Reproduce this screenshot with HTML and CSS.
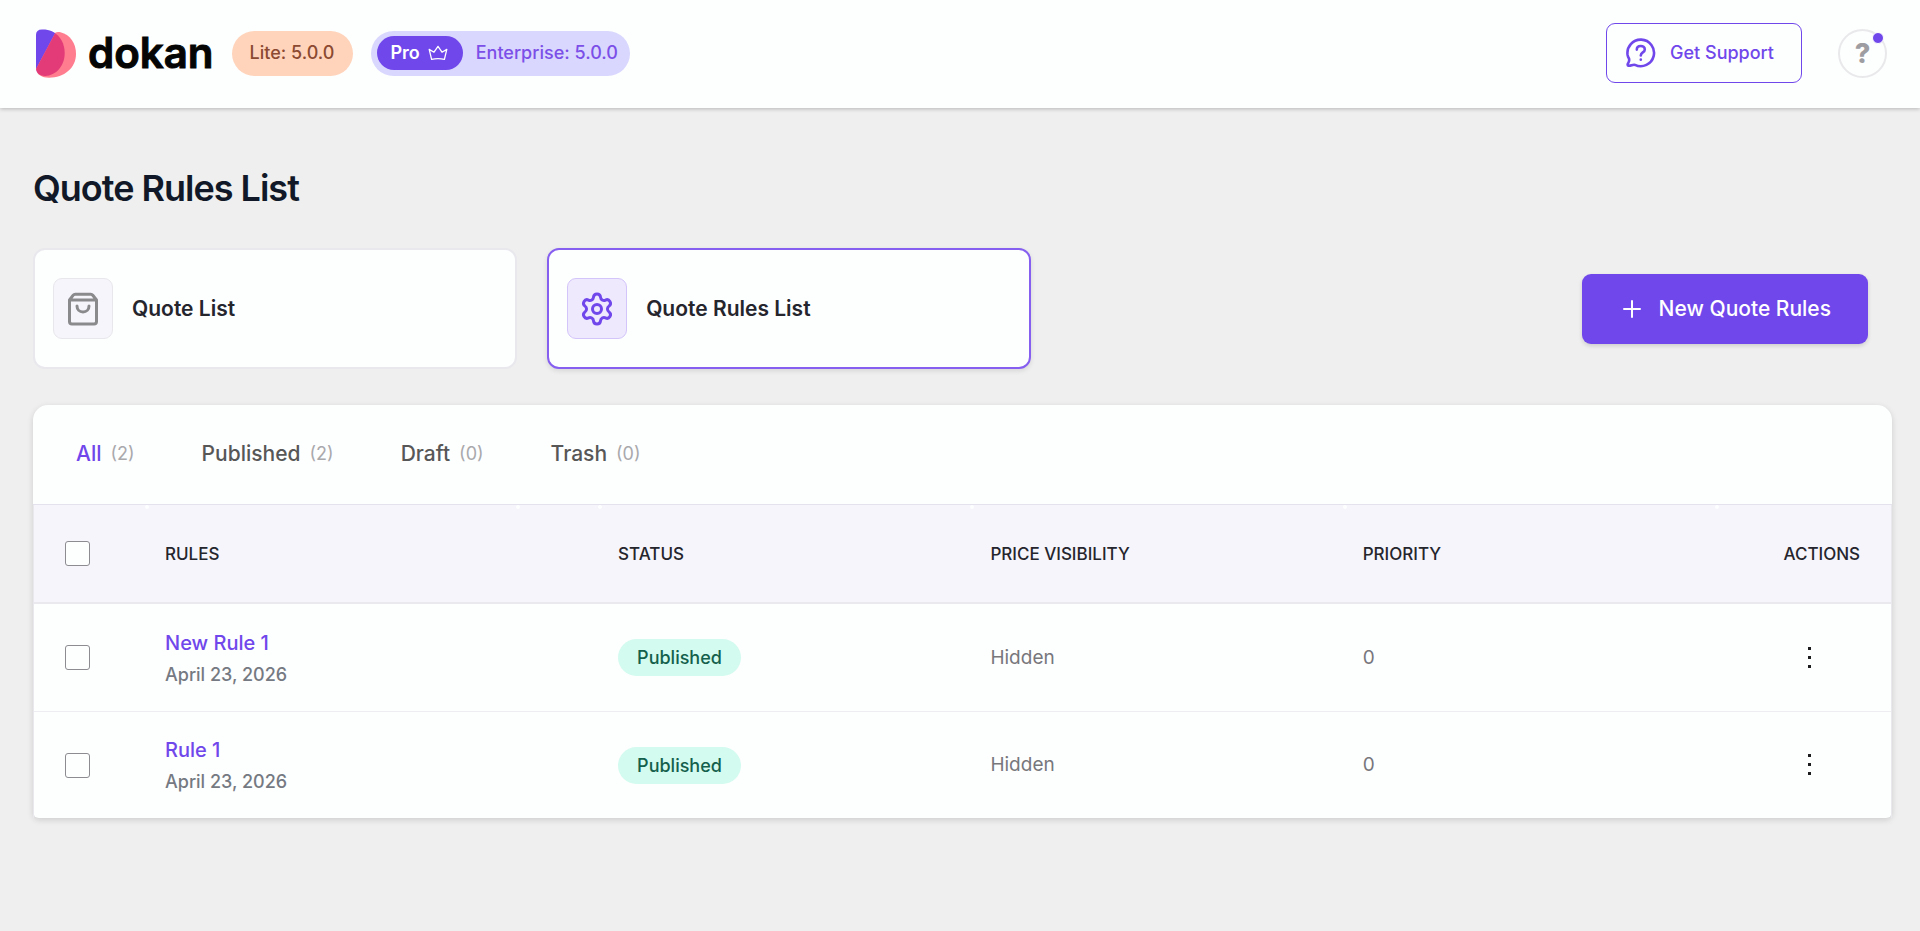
FILE: index.html
```html
<!DOCTYPE html>
<html lang="en">

<head>
  <meta charset="UTF-8">
  <meta name="viewport" content="width=device-width, initial-scale=1.0">
  <title>Quote Rules List - Dokan</title>
  <link rel="stylesheet" href="styles.css">
</head>

<body>
  <!-- Top bar -->
  <header class="header">
    <div class="brand">
      <a href="#" class="logo">
        <svg class="logo-mark" viewBox="0 0 40 49" aria-hidden="true">
          <defs>
            <clipPath id="leaf">
              <path d="M19.5 3.5C21 2.6 23 2.9 24.5 3.2C34 5.5 40 14 40 25C40 39 28 48.7 13 48.7C6 48.7 1 46 0 40Z" />
            </clipPath>
          </defs>
          <path fill="#7047eb" d="M0 6Q0 .5 6 .5H7C20 .5 28.7 11 28.7 24C28.7 37 20 46.5 9 47C4 47 0 44 0 39Z" />
          <path fill="#ff7d8e" d="M19.5 3.5C21 2.6 23 2.9 24.5 3.2C34 5.5 40 14 40 25C40 39 28 48.7 13 48.7C6 48.7 1 46 0 40Z" />
          <path fill="#e33b78" clip-path="url(#leaf)" d="M0 6Q0 .5 6 .5H7C20 .5 28.7 11 28.7 24C28.7 37 20 46.5 9 47C4 47 0 44 0 39Z" />
        </svg>
        <span class="logo-text">dokan</span>
      </a>
      <span class="version version-lite">Lite: 5.0.0</span>
      <span class="version version-pro">
        <span class="pro-tag">Pro
          <svg class="crown" viewBox="0 0 20 16" aria-hidden="true">
            <path d="M3.6 14.4L1.2 4.4L6 7.2L10 1.4L14 7.2L18.8 4.4L16.4 14.4Q10 12.8 3.6 14.4Z" />
          </svg>
        </span>
        Enterprise: 5.0.0
      </span>
    </div>
    <div class="header-actions">
      <a href="#" class="support">
        <svg viewBox="0 0 30 30" aria-hidden="true">
          <path d="M1.6 17A13.3 13.3 0 1 1 9 26.9C6.5 26.3 5.2 28 2.6 27.8C1.4 27.6 1.4 26.2 2.2 25C3.4 23 3.6 21.6 2.7 20C1.9 18.8 1.8 18 1.6 17Z" />
          <path d="M10.8 11.6C10.8 6.8 18.8 6.8 18.8 11.4C18.8 14.6 14.8 14.2 14.8 17.4" />
          <path d="M14.8 21.6V21.7" />
        </svg>
        Get Support
      </a>
      <button type="button" class="help" aria-label="Help">?<span class="help-dot"></span></button>
    </div>
  </header>

  <main class="main">
    <h1>Quote Rules List</h1>

    <!-- Section switcher -->
    <div class="toolbar">
      <nav class="cards">
        <a href="#" class="card">
          <span class="card-icon">
            <svg class="icon-bag" viewBox="0 0 32 34" aria-hidden="true">
              <path d="M2.5 8L6.2 3.2Q7 2.2 8.2 2.2H23.8Q25 2.2 25.8 3.2L29.5 8V29.5Q29.5 32 27 32H5Q2.5 32 2.5 29.5ZM2.5 8H29.5" />
              <path d="M10 14C10 17.5 12.5 20 16 20S22 17.5 22 14" />
            </svg>
          </span>
          Quote List
        </a>
        <a href="#" class="card active">
          <span class="card-icon">
            <svg class="icon-gear" viewBox="0 0 24 24" aria-hidden="true">
              <path d="M9.671 4.136a2.34 2.34 0 0 1 4.659 0 2.34 2.34 0 0 0 3.319 1.915 2.34 2.34 0 0 1 2.33 4.033 2.34 2.34 0 0 0 0 3.831 2.34 2.34 0 0 1-2.33 4.033 2.34 2.34 0 0 0-3.319 1.915 2.34 2.34 0 0 1-4.659 0 2.34 2.34 0 0 0-3.32-1.915 2.34 2.34 0 0 1-2.33-4.033 2.34 2.34 0 0 0 0-3.831A2.34 2.34 0 0 1 6.35 6.051a2.34 2.34 0 0 0 3.319-1.915" />
              <circle cx="12" cy="12" r="3" />
            </svg>
          </span>
          Quote Rules List
        </a>
      </nav>
      <button type="button" class="new-rule">
        <svg viewBox="0 0 18 18" aria-hidden="true">
          <path d="M9 1V17M1 9H17" />
        </svg>
        New Quote Rules
      </button>
    </div>

    <!-- Rules table -->
    <section class="panel">
      <nav class="tabs">
        <a href="#" class="tab active">All <span class="count">(2)</span></a>
        <a href="#" class="tab">Published <span class="count">(2)</span></a>
        <a href="#" class="tab">Draft <span class="count">(0)</span></a>
        <a href="#" class="tab">Trash <span class="count">(0)</span></a>
      </nav>
      <table class="rules">
        <thead>
          <tr>
            <th class="col-check"><input type="checkbox" aria-label="Select all"></th>
            <th class="col-rules">Rules</th>
            <th>Status</th>
            <th>Price Visibility</th>
            <th>Priority</th>
            <th class="col-actions">Actions</th>
          </tr>
        </thead>
        <tbody>
          <tr>
            <td class="col-check"><input type="checkbox" aria-label="Select New Rule 1"></td>
            <td>
              <a href="#" class="rule-name">New Rule 1</a>
              <div class="rule-date">April 23, 2026</div>
            </td>
            <td><span class="badge">Published</span></td>
            <td>Hidden</td>
            <td>0</td>
            <td class="col-menu">
              <button type="button" class="menu" aria-label="Actions for New Rule 1">
                <svg viewBox="0 0 4 24" aria-hidden="true"><path d="M0 1H3V4H0ZM0 10H3V13H0ZM0 19H3V22H0Z" /></svg>
              </button>
            </td>
          </tr>
          <tr>
            <td class="col-check"><input type="checkbox" aria-label="Select Rule 1"></td>
            <td>
              <a href="#" class="rule-name">Rule 1</a>
              <div class="rule-date">April 23, 2026</div>
            </td>
            <td><span class="badge">Published</span></td>
            <td>Hidden</td>
            <td>0</td>
            <td class="col-menu">
              <button type="button" class="menu" aria-label="Actions for Rule 1">
                <svg viewBox="0 0 4 24" aria-hidden="true"><path d="M0 1H3V4H0ZM0 10H3V13H0ZM0 19H3V22H0Z" /></svg>
              </button>
            </td>
          </tr>
        </tbody>
      </table>
    </section>
  </main>
</body>

</html>
```
FILE: styles.css
```css
* {
  margin: 0;
  padding: 0;
  box-sizing: border-box;
}

body {
  font-family: Inter, "Liberation Sans", sans-serif;
  font-size: 18px;
  line-height: 24px;
  color: #25252d;
  background-color: #efefef;
}

a {
  color: inherit;
  text-decoration: none;
}

button {
  font-family: inherit;
  cursor: pointer;
}

svg {
  display: block;
  flex: none;
  fill: none;
  stroke: currentColor;
  stroke-linecap: round;
  stroke-linejoin: round;
}

/* Top bar */
.header {
  display: flex;
  align-items: center;
  justify-content: space-between;
  min-height: 108px;
  padding: 0 33px 2px 36px;
  background-color: #fdfefe;
  box-shadow: 0 1px 4px rgba(0, 0, 0, 0.24);
}

.brand {
  display: flex;
  align-items: center;
  gap: 18px;
}

.logo {
  display: flex;
  align-items: center;
  gap: 12px;
}

.logo-mark {
  width: 40px;
  height: 49px;
  stroke: none;
}

.logo-text {
  font-size: 42px;
  font-weight: 600;
  line-height: 46px;
  color: #050505;
  -webkit-text-stroke: 1px #050505;
}

.version {
  display: flex;
  align-items: center;
  height: 45px;
  border-radius: 24px;
  font-weight: 500;
  white-space: nowrap;
}

.version-lite {
  padding: 0 19px 0 18px;
  color: #8b4a31;
  background-color: #ffd4bb;
}

.version-pro {
  gap: 13px;
  padding: 0 12px 0 6px;
  color: #7b4fe8;
  background-color: #d9d7fd;
}

.pro-tag {
  display: flex;
  align-items: center;
  gap: 8px;
  height: 34px;
  padding: 0 15px 0 13px;
  border-radius: 17px;
  font-weight: 600;
  color: #fff;
  background-color: #7047eb;
}

.crown {
  width: 20px;
  height: 16px;
  stroke-width: 1.3;
}

.header-actions {
  display: flex;
  align-items: center;
  gap: 36px;
}

.support {
  display: flex;
  align-items: center;
  gap: 14px;
  height: 60px;
  padding: 0 27px 0 19px;
  border: 1px solid #7047eb;
  border-radius: 9px;
  font-weight: 500;
  color: #7047eb;
}

.support svg {
  width: 30px;
  height: 30px;
  stroke-width: 2.6;
}

.help {
  position: relative;
  width: 49px;
  height: 49px;
  border: 2px solid #e9e9ec;
  border-radius: 50%;
  font-size: 27px;
  font-weight: 800;
  color: #9d9da2;
  background-color: transparent;
}

.help-dot {
  position: absolute;
  top: 1px;
  right: 1px;
  width: 12px;
  height: 12px;
  border: 1px solid #fdfefe;
  border-radius: 50%;
  background-color: #7047eb;
}

/* Page */
.main {
  padding: 59px 28px 60px 33px;
}

h1 {
  margin-bottom: 38px;
  font-size: 36px;
  font-weight: 600;
  line-height: 43px;
  letter-spacing: -1px;
  color: #111827;
}

.toolbar {
  display: flex;
  align-items: center;
  justify-content: space-between;
  margin-bottom: 36px;
}

.cards {
  display: grid;
  grid-template-columns: 1fr 1fr;
  gap: 30px;
  width: 53.7%;
}

.card {
  display: flex;
  align-items: center;
  gap: 19px;
  min-height: 121px;
  padding: 0 18px;
  border: 2px solid #e8e8ed;
  border-radius: 12px;
  font-size: 21px;
  font-weight: 600;
  background-color: #fdfefe;
}

.card.active {
  border: 2px solid #865ff0;
  box-shadow: 0 2px 5px rgba(0, 0, 0, 0.1);
}

.card-icon {
  display: flex;
  align-items: center;
  justify-content: center;
  width: 60px;
  height: 61px;
  border: 1px solid #e8e8ec;
  border-radius: 9px;
  color: #8a8a8c;
  background-color: #f7f5fc;
}

.card.active .card-icon {
  border-color: #d3c5fa;
  color: #7047eb;
  background-color: #efe9fe;
}

.icon-bag {
  width: 32px;
  height: 34px;
  stroke-width: 3;
}

.icon-gear {
  width: 36px;
  height: 36px;
  stroke-width: 2;
}

.new-rule {
  display: flex;
  align-items: center;
  gap: 18px;
  height: 70px;
  margin-right: 24px;
  padding: 0 37px 0 41px;
  border: 0;
  border-radius: 9px;
  font-size: 21px;
  font-weight: 500;
  color: #fff;
  background-color: #7047eb;
  box-shadow: 0 2px 4px rgba(0, 0, 0, 0.14);
}

.new-rule svg {
  width: 18px;
  height: 18px;
  stroke-width: 2;
}

/* Rules table */
.panel {
  border-radius: 15px 15px 6px 6px;
  background-color: #fdfefe;
  box-shadow: 0 2px 6px rgba(0, 0, 0, 0.14);
}

.tabs {
  display: flex;
  gap: 67px;
  padding: 0 43px 1px;
  border-bottom: 1px solid #e4e2ec;
}

.tab {
  display: flex;
  align-items: center;
  gap: 9px;
  height: 98px;
  font-size: 21px;
  font-weight: 500;
  color: #575757;
}

.tab.active {
  color: #7047eb;
}

.count {
  font-size: 18px;
  font-weight: 400;
  color: #a9a9ac;
}

.rules {
  width: 100%;
  table-layout: fixed;
  border-collapse: separate;
  border-spacing: 0;
  border: solid #e8e8ed;
  border-width: 0 1px;
}

th,
td {
  padding: 0 18px;
  text-align: left;
  vertical-align: middle;
}

th {
  position: relative;
  height: 99px;
  border-bottom: 2px solid #e9e9ee;
  font-size: 17px;
  font-weight: 500;
  text-transform: uppercase;
  background-color: #f6f5fb;
}

/* small notches along the top of the header row */
th + th::before,
.col-rules::after {
  content: "";
  position: absolute;
  top: 0;
  left: -2px;
  width: 4px;
  height: 4px;
  border-radius: 50%;
  background-color: #fdfefe;
}

.col-rules::after {
  left: auto;
  right: 80px;
}

td {
  height: 107px;
  font-size: 19px;
  color: #77777c;
}

tr + tr td {
  border-top: 1px solid #ededf2;
}

.rules .col-check {
  width: 113px;
  padding-left: 31px;
}

.col-rules {
  width: 24.4%;
}

.rules .col-actions {
  width: 174px;
  padding-right: 31px;
  text-align: right;
}

.rules .col-menu {
  padding-right: 63px;
}

input[type="checkbox"] {
  appearance: none;
  display: block;
  width: 25px;
  height: 25px;
  border: 1px solid #8c8c91;
  border-radius: 3px;
  background-color: #fdfefe;
}

.rule-name {
  display: block;
  padding-top: 2px;
  font-size: 20px;
  font-weight: 500;
  line-height: 32px;
  color: #7047eb;
}

.rule-date {
  font-size: 18px;
  font-weight: 500;
  line-height: 32px;
  color: #757a82;
}

.badge {
  display: block;
  width: fit-content;
  padding: 0 19px;
  border-radius: 19px;
  font-size: 18px;
  font-weight: 500;
  line-height: 37px;
  color: #14604c;
  background-color: #d3fbef;
}

.menu {
  display: flex;
  align-items: center;
  justify-content: center;
  width: 36px;
  height: 36px;
  margin-left: auto;
  border: 0;
  color: #1c1c1e;
  background-color: transparent;
}

.menu svg {
  width: 4px;
  height: 24px;
  fill: currentColor;
  stroke: none;
}
```
